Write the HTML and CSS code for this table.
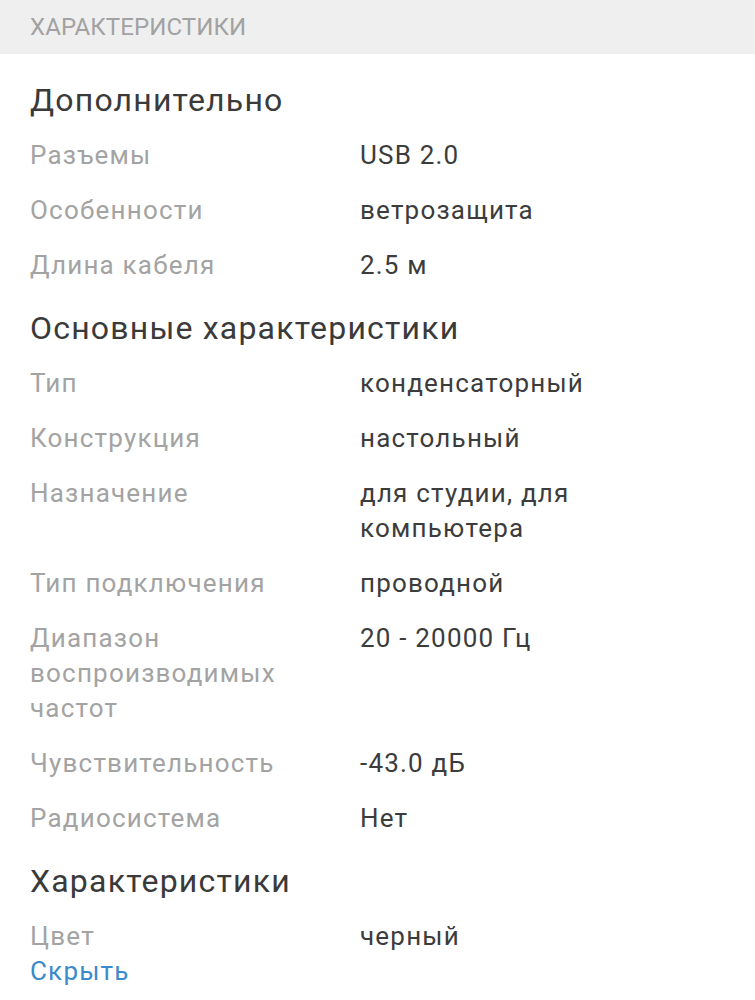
FILE: index.html
```html
<!DOCTYPE html>
<html lang="ru">
<head>
<meta charset="utf-8">
<link rel="stylesheet" href="styles.css">
</head>
<body>
<div class="header">ХАРАКТЕРИСТИКИ</div>
<div class="content">
  <h2 class="group-title">Дополнительно</h2>
  <div class="row"><div class="label">Разъемы</div><div class="value">USB 2.0</div></div>
  <div class="row"><div class="label">Особенности</div><div class="value">ветрозащита</div></div>
  <div class="row"><div class="label">Длина кабеля</div><div class="value">2.5 м</div></div>

  <h2 class="group-title">Основные характеристики</h2>
  <div class="row"><div class="label">Тип</div><div class="value">конденсаторный</div></div>
  <div class="row"><div class="label">Конструкция</div><div class="value">настольный</div></div>
  <div class="row"><div class="label">Назначение</div><div class="value">для студии, для компьютера</div></div>
  <div class="row"><div class="label">Тип подключения</div><div class="value">проводной</div></div>
  <div class="row"><div class="label">Диапазон воспроизводимых частот</div><div class="value">20 - 20000 Гц</div></div>
  <div class="row"><div class="label">Чувствительность</div><div class="value">-43.0 дБ</div></div>
  <div class="row"><div class="label">Радиосистема</div><div class="value">Нет</div></div>

  <h2 class="group-title">Характеристики</h2>
  <div class="row last"><div class="label">Цвет</div><div class="value">черный</div></div>
  <a class="toggle" href="#">Скрыть</a>
</div>
</body>
</html>
```
FILE: styles.css
```css
* { box-sizing: border-box; }
body {
  margin: 0;
  background: #ffffff;
  font-family: Roboto, "Noto Sans", sans-serif;
  color: #3a3a3a;
}
.header {
  background: #efefef;
  height: 54px;
  padding: 0 30px;
  display: flex;
  align-items: center;
  font-size: 24px;
  color: #a2a2a2;
  letter-spacing: 0.1px;
}
.content {
  padding: 26px 30px 0;
}
.group-title {
  margin: 25px 0 18px;
  font-size: 32px;
  line-height: 40px;
  font-weight: 400;
  letter-spacing: 1.2px;
  color: #3a3a3a;
}
.content .group-title:first-child { margin-top: 0; }
.row {
  display: grid;
  grid-template-columns: 330px 1fr;
  font-size: 26px;
  line-height: 35px;
  letter-spacing: 1.2px;
  margin-bottom: 20px;
}
.row.last { margin-bottom: 0; }
.label {
  color: #a3a3a3;
  padding-right: 30px;
}
.value {
  color: #3c3c3c;
}
.toggle {
  display: block;
  font-size: 26px;
  line-height: 35px;
  letter-spacing: 1.2px;
  color: #3b8bcc;
  text-decoration: none;
}
```
